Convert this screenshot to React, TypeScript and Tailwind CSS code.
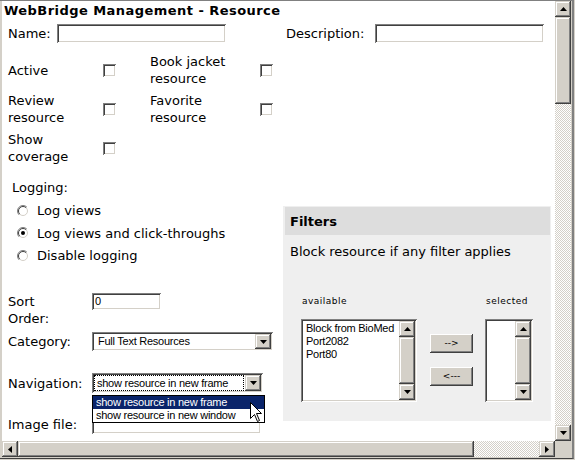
import React from "react";

const raised =
  "shadow-[inset_-1px_-1px_#404040,inset_1px_1px_#ffffff,inset_-2px_-2px_#808080,inset_2px_2px_#d4d0c8]";
const barRaised =
  "shadow-[inset_-1px_-1px_#404040,inset_1px_1px_#d4d0c8,inset_-2px_-2px_#808080,inset_2px_2px_#ffffff]";
const sunken =
  "shadow-[inset_1px_1px_#808080,inset_-1px_-1px_#ffffff,inset_2px_2px_#404040,inset_-2px_-2px_#d4d0c8]";
const checker =
  "bg-[image:repeating-conic-gradient(#d4d0c8_0%_25%,#ffffff_0%_50%)] bg-[length:2px_2px]";
const sysFont = "font-['Liberation_Sans',Arial,sans-serif] text-[11px] tracking-[-0.25px]";

type Dir = "up" | "down" | "left" | "right";

function Tri({ dir }: { dir: Dir }) {
  const vertical = dir === "up" || dir === "down";
  const pts = {
    up: "3.5,0 7,4 0,4",
    down: "0,0 7,0 3.5,4",
    left: "4,0 4,7 0,3.5",
    right: "0,0 0,7 4,3.5",
  }[dir];
  return (
    <svg
      width={vertical ? 7 : 4}
      height={vertical ? 4 : 7}
      viewBox={vertical ? "0 0 7 4" : "0 0 4 7"}
    >
      <polygon points={pts} fill="#000" />
    </svg>
  );
}

function ScrollBtn({ dir, className = "h-4" }: { dir: Dir; className?: string }) {
  return (
    <div
      className={`w-4 shrink-0 bg-[#d4d0c8] flex items-center justify-center ${barRaised} ${className}`}
    >
      <Tri dir={dir} />
    </div>
  );
}

function Checkbox() {
  return <span className={`block w-[13px] h-[13px] bg-white ${sunken}`} />;
}

function Radio({ checked }: { checked?: boolean }) {
  return (
    <svg width="12" height="12" viewBox="0 0 12 12" className="shrink-0">
      <circle cx="6" cy="6" r="5.5" fill="#fff" />
      <path d="M2.1 9.9 A5.5 5.5 0 0 1 9.9 2.1" stroke="#808080" fill="none" />
      <path d="M9.9 2.1 A5.5 5.5 0 0 1 2.1 9.9" stroke="#ffffff" fill="none" />
      <path d="M2.8 9.2 A4.5 4.5 0 0 1 9.2 2.8" stroke="#404040" fill="none" />
      <path d="M9.2 2.8 A4.5 4.5 0 0 1 2.8 9.2" stroke="#d4d0c8" fill="none" />
      {checked && <circle cx="6" cy="6" r="2" fill="#000" />}
    </svg>
  );
}

function TextBox({ className, value = "" }: { className: string; value?: string }) {
  return (
    <input
      readOnly
      value={value}
      className={`block bg-white pl-[3px] outline-none text-black ${sysFont} ${sunken} ${className}`}
    />
  );
}

function ListBox({ items }: { items: string[] }) {
  return (
    <div className={`h-[83px] bg-white p-[2px] flex ${sunken}`}>
      <div className={`flex-1 pl-[3px] pt-[1px] leading-[13px] overflow-hidden whitespace-nowrap ${sysFont}`}>
        {items.map((it) => (
          <div key={it}>{it}</div>
        ))}
      </div>
      <div className="w-4 flex flex-col">
        <ScrollBtn dir="up" />
        <div className={`flex-1 bg-[#d4d0c8] ${barRaised}`} />
        <ScrollBtn dir="down" />
      </div>
    </div>
  );
}

function Select({
  className,
  text,
  focus,
}: {
  className: string;
  text: string;
  focus?: boolean;
}) {
  return (
    <div className={`bg-white p-[2px] flex ${sunken} ${className}`}>
      <div
        className={`flex-1 flex items-center whitespace-nowrap overflow-hidden ${sysFont} ${
          focus ? "border border-dotted border-black pl-[2px] mr-[1px]" : "pl-[4px]"
        }`}
      >
        {text}
      </div>
      <ScrollBtn dir="down" className="h-full" />
    </div>
  );
}

function Cursor() {
  return (
    <svg width="13" height="21" viewBox="0 0 13 21">
      <path
        d="M0.5 0.5 L0.5 16.5 L4.5 12.5 L7.5 19.5 L9.5 18.5 L6.5 11.5 L11.5 11.5 Z"
        fill="#fff"
        stroke="#000"
        strokeWidth="1"
      />
    </svg>
  );
}

function Button({ children }: { children: React.ReactNode }) {
  return (
    <div
      className={`h-[19px] w-[43px] bg-[#d4d0c8] flex items-center justify-center text-[9px] leading-none ${raised}`}
    >
      {children}
    </div>
  );
}

export default function App() {
  const logging = ["Log views", "Log views and click-throughs", "Disable logging"];

  return (
    <div className="w-[575px] h-[460px] bg-[#d4d0c8] pr-[1px] pb-[1px] overflow-hidden font-['DejaVu_Sans',Verdana,sans-serif] text-[13px] leading-[17px] text-black">
      <div className="h-full flex flex-col border-t border-t-[#808080] border-r-2 border-r-[#808080] border-b border-b-[#404040] pl-[2px] pr-[1px] pb-[1px]">
        <div className="flex h-[440px]">
          {/* Page */}
          <div className="relative w-[553px] h-full bg-white overflow-hidden">
            <div className="pl-[2px] pt-[1px] font-bold tracking-[0.45px]">
              WebBridge Management - Resource
            </div>

            {/* Name / description */}
            <div className="mt-[5px] pl-[6px] h-[19px] flex items-center">
              <span className="w-[49px]">Name:</span>
              <TextBox className="w-[169px] h-[19px]" />
              <span className="ml-[60px] w-[89px]">Description:</span>
              <TextBox className="w-[169px] h-[19px]" />
            </div>

            {/* Flags */}
            <div className="mt-[10px] pl-[6px] grid grid-cols-[95px_47px_110px_13px] auto-rows-[34px] gap-y-[5px]">
              <div className="flex items-center">Active</div>
              <div className="flex items-center"><Checkbox /></div>
              <div className="flex items-center">Book jacket<br />resource</div>
              <div className="flex items-center"><Checkbox /></div>

              <div className="flex items-center">Review<br />resource</div>
              <div className="flex items-center"><Checkbox /></div>
              <div className="flex items-center">Favorite<br />resource</div>
              <div className="flex items-center"><Checkbox /></div>

              <div className="flex items-center">Show<br />coverage</div>
              <div className="flex items-center"><Checkbox /></div>
            </div>

            <div className="flex">
              {/* Left column */}
              <div className="w-[281px] shrink-0">
                <div className="mt-[14px] pl-[10px]">Logging:</div>
                <div className="mt-[6px] pl-[15px] flex flex-col gap-[5.5px]">
                  {logging.map((l, i) => (
                    <div key={l} className="flex items-center gap-[8px] h-[17px]">
                      <Radio checked={i === 1} />
                      <span>{l}</span>
                    </div>
                  ))}
                </div>

                <div className="mt-[29px] pl-[6px] flex items-start">
                  <span className="w-[84px]">Sort<br />Order:</span>
                  <TextBox className="w-[69px] h-[17px]" value="0" />
                </div>

                <div className="mt-[5px] pl-[6px] flex items-center">
                  <span className="w-[84px]">Category:</span>
                  <Select className="w-[181px] h-[19px]" text="Full Text Resources" />
                </div>

                <div className="mt-[22px] pl-[6px] flex items-center">
                  <span className="w-[84px]">Navigation:</span>
                  <div className="relative">
                    <Select
                      className="w-[171px] h-[20px]"
                      text="show resource in new frame"
                      focus
                    />
                    <div
                      className={`absolute left-0 top-[22px] z-10 w-[173px] border border-black bg-white leading-[13px] ${sysFont}`}
                    >
                      <div className="h-[13px] pl-[3px] bg-[#0a246a] text-white">
                        show resource in new frame
                      </div>
                      <div className="h-[13px] pl-[3px]">show resource in new window</div>
                    </div>
                    <div className="absolute left-[158px] top-[29px] z-20">
                      <Cursor />
                    </div>
                  </div>
                </div>

                <div className="mt-[22px] pl-[6px] flex items-center">
                  <span className="w-[84px]">Image file:</span>
                  <TextBox className="w-[169px] h-[19px]" />
                </div>
              </div>

              {/* Filters panel */}
              <div className="mt-[41px] w-[268px] h-[215px] shrink-0 bg-[#efefef] pt-[1px] pl-[2px] pr-[1px]">
                <div className="h-[28px] bg-[#dddddd] flex items-center pl-[5px] font-bold">
                  Filters
                </div>
                <div className="mt-[8px] pl-[5px]">Block resource if any filter applies</div>

                <div className="mt-[36px] ml-[16px] flex">
                  <div className="w-[116px]">
                    <div className="h-[11px] pl-[1px] text-[9px] leading-[11px] tracking-[0.5px]">
                      available
                    </div>
                    <div className="mt-[12px]">
                      <ListBox items={["Block from BioMed", "Port2082", "Port80"]} />
                    </div>
                  </div>

                  <div className="ml-[13px] w-[43px] pt-[38px] flex flex-col gap-[14px]">
                    <Button>--&gt;</Button>
                    <Button>&lt;---</Button>
                  </div>

                  <div className="ml-[12px] w-[48px]">
                    <div className="h-[11px] pl-[1px] text-[9px] leading-[11px] tracking-[0.5px]">
                      selected
                    </div>
                    <div className="mt-[12px]">
                      <ListBox items={[]} />
                    </div>
                  </div>
                </div>
              </div>
            </div>
          </div>

          {/* Vertical scrollbar */}
          <div className="w-4 h-full flex flex-col">
            <ScrollBtn dir="up" />
            <div className={`h-[87px] bg-[#d4d0c8] ${barRaised}`} />
            <div className={`flex-1 ${checker}`} />
            <ScrollBtn dir="down" />
          </div>
        </div>

        {/* Horizontal scrollbar */}
        <div className="flex h-4">
          <div className="w-[553px] flex">
            <ScrollBtn dir="left" />
            <div className={`w-[456px] bg-[#d4d0c8] ${barRaised}`} />
            <div className={`flex-1 ${checker}`} />
            <ScrollBtn dir="right" />
          </div>
          <div className="w-4 h-4 bg-[#d4d0c8]" />
        </div>
      </div>
    </div>
  );
}
